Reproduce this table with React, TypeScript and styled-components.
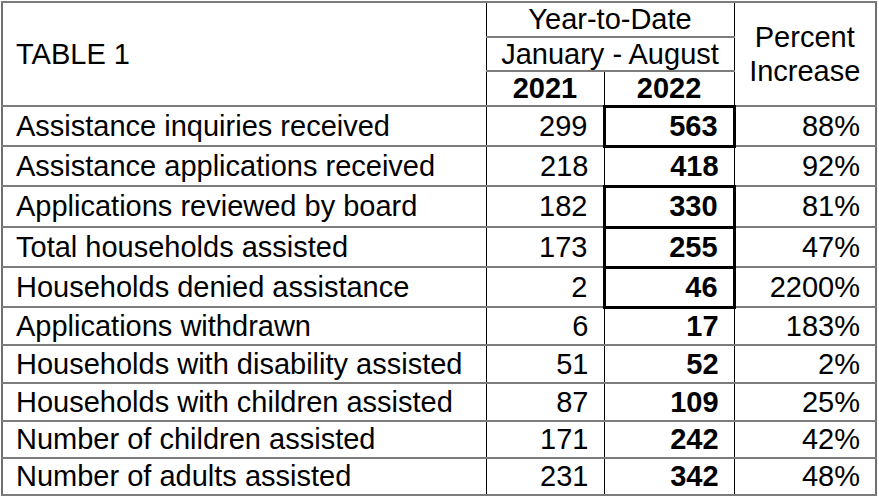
import React from "react";
import styled, { createGlobalStyle } from "styled-components";

const Global = createGlobalStyle`
  html, body { margin: 0; padding: 0; background: #fff; }
  body { font-family: "Liberation Sans", Arial, sans-serif; color: #000; }
`;

const Page = styled.div`
  padding: 1px 0 0 1px;
  width: 879px;
  box-sizing: border-box;
`;

const Table = styled.table`
  border-collapse: collapse;
  table-layout: fixed;
  width: 874px;
  font-family: "Liberation Sans", Arial, sans-serif;
  font-size: 29px;
  line-height: 1;
  border: 2px solid #6f6f6f;
`;

const Cell = styled.td<{ $align?: "left" | "right" | "center"; $bold?: boolean; $boxed?: boolean }>`
  padding: 0 ${(p) => (p.$align === "right" ? "15px" : "0")} 0 ${(p) => (p.$align === "right" ? "0" : "13px")};
  text-align: ${(p) => p.$align ?? "left"};
  font-weight: ${(p) => (p.$bold ? 700 : 400)};
  vertical-align: middle;
  white-space: nowrap;
  overflow: hidden;
  border-top: 2px solid #7c7c7c;
  border-bottom: 2px solid #7c7c7c;
  border-left: 1px solid #000;
  border-right: 1px solid #000;
  ${(p) => (p.$boxed ? "border: 3px solid #000;" : "")}
`;

const HeadCell = styled.th<{ $bold?: boolean; $align?: "left" | "center"; $tall?: boolean }>`
  padding: 0 0 0 ${(p) => (p.$align === "left" ? "13px" : "0")};
  text-align: ${(p) => p.$align ?? "center"};
  font-weight: ${(p) => (p.$bold ? 700 : 400)};
  vertical-align: middle;
  white-space: nowrap;
  line-height: ${(p) => (p.$tall ? "34px" : "1")};
  border-top: 2px solid #7c7c7c;
  border-bottom: 2px solid #7c7c7c;
  border-left: 1px solid #000;
  border-right: 1px solid #000;
`;

const HeadRow = styled.tr<{ $h: number }>`
  height: ${(p) => p.$h}px;
`;

const BodyRow = styled.tr<{ $h: number }>`
  height: ${(p) => p.$h}px;
`;

type Row = { label: string; y2021: string; y2022: string; pct: string; boxed?: boolean; h: number };

const rows: Row[] = [
  { label: "Assistance inquiries received", y2021: "299", y2022: "563", pct: "88%", boxed: true, h: 40 },
  { label: "Assistance applications received", y2021: "218", y2022: "418", pct: "92%", h: 40 },
  { label: "Applications reviewed by board", y2021: "182", y2022: "330", pct: "81%", boxed: true, h: 41 },
  { label: "Total households assisted", y2021: "173", y2022: "255", pct: "47%", boxed: true, h: 40 },
  { label: "Households denied assistance", y2021: "2", y2022: "46", pct: "2200%", boxed: true, h: 40 },
  { label: "Applications withdrawn", y2021: "6", y2022: "17", pct: "183%", h: 38 },
  { label: "Households with disability assisted", y2021: "51", y2022: "52", pct: "2%", h: 38 },
  { label: "Households with children assisted", y2021: "87", y2022: "109", pct: "25%", h: 38 },
  { label: "Number of children assisted", y2021: "171", y2022: "242", pct: "42%", h: 37 },
  { label: "Number of adults assisted", y2021: "231", y2022: "342", pct: "48%", h: 37 },
];

export default function App() {
  return (
    <>
      <Global />
      <Page>
        <Table>
          <colgroup>
            <col style={{ width: 484 }} />
            <col style={{ width: 118 }} />
            <col style={{ width: 130 }} />
            <col style={{ width: 142 }} />
          </colgroup>
          <thead>
            <HeadRow $h={35}>
              <HeadCell rowSpan={3} $align="left">TABLE 1</HeadCell>
              <HeadCell colSpan={2}>Year-to-Date</HeadCell>
              <HeadCell rowSpan={3} $tall>
                Percent
                <br />
                Increase
              </HeadCell>
            </HeadRow>
            <HeadRow $h={34}>
              <HeadCell colSpan={2}>January - August</HeadCell>
            </HeadRow>
            <HeadRow $h={35}>
              <HeadCell $bold>2021</HeadCell>
              <HeadCell $bold>2022</HeadCell>
            </HeadRow>
          </thead>
          <tbody>
            {rows.map((r) => (
              <BodyRow key={r.label} $h={r.h}>
                <Cell>{r.label}</Cell>
                <Cell $align="right">{r.y2021}</Cell>
                <Cell $align="right" $bold $boxed={r.boxed}>
                  {r.y2022}
                </Cell>
                <Cell $align="right">{r.pct}</Cell>
              </BodyRow>
            ))}
          </tbody>
        </Table>
      </Page>
    </>
  );
}
